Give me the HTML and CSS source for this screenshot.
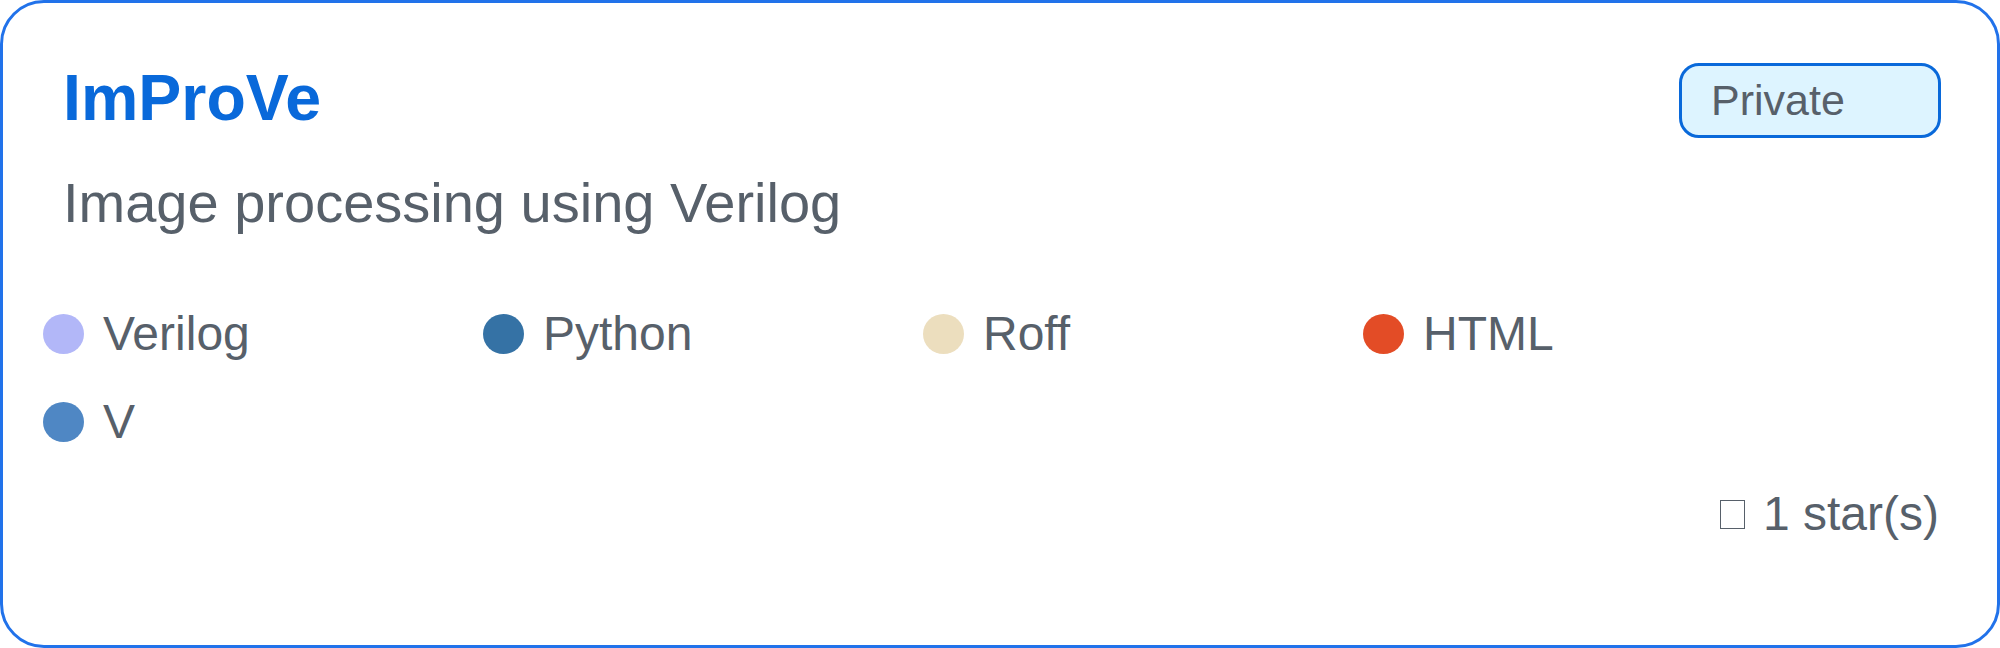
FILE: index.html
```html
<!DOCTYPE html>
<html lang="en">
<head>
<meta charset="utf-8">
<title>ImProVe</title>
<link rel="stylesheet" href="styles.css">
</head>
<body>
<div class="card">
  <div class="header">
    <h1 class="title">ImProVe</h1>
    <span class="badge">Private</span>
  </div>
  <p class="desc">Image processing using Verilog</p>
  <ul class="langs">
    <li class="lang"><span class="dot dot-verilog"></span><span class="lang-name">Verilog</span></li>
    <li class="lang"><span class="dot dot-python"></span><span class="lang-name">Python</span></li>
    <li class="lang"><span class="dot dot-roff"></span><span class="lang-name">Roff</span></li>
    <li class="lang"><span class="dot dot-html"></span><span class="lang-name">HTML</span></li>
    <li class="lang"><span class="dot dot-v"></span><span class="lang-name">V</span></li>
  </ul>
  <div class="stars">
    <span class="star-box" aria-label="star"></span>
    <span class="star-text">1 star(s)</span>
  </div>
</div>
</body>
</html>
```

FILE: styles.css
```css
html, body {
  margin: 0;
  padding: 0;
  background: #ffffff;
}

body {
  font-family: "Liberation Sans", Arial, sans-serif;
  color: #57606a;
}

.card {
  box-sizing: border-box;
  width: 2000px;
  height: 648px;
  border: 3px solid #2172ea;
  border-radius: 44px;
  background: #ffffff;
  padding: 57px 40px 0 40px;
  display: flex;
  flex-direction: column;
}

.header {
  display: flex;
  justify-content: space-between;
  align-items: flex-start;
  padding: 0 16px 0 20px;
}

.title {
  margin: 0;
  font-size: 64.5px;
  line-height: 76px;
  font-weight: 700;
  color: #0969da;
}

.badge {
  box-sizing: border-box;
  width: 262px;
  height: 75px;
  margin-top: 3px;
  border: 3px solid #0969da;
  border-radius: 20px;
  background: #ddf4ff;
  display: flex;
  align-items: center;
  padding-left: 29px;
  font-size: 43px;
  color: #57606a;
}

.desc {
  margin: 33px 0 0 0;
  padding-left: 20px;
  font-size: 56px;
  line-height: 64px;
}

.langs {
  list-style: none;
  margin: 75px 0 0 0;
  padding: 0;
  display: grid;
  grid-template-columns: repeat(4, 440px);
  row-gap: 40px;
}

.lang {
  display: flex;
  align-items: center;
  gap: 19px;
  height: 48px;
}

.dot {
  width: 41px;
  height: 40px;
  border-radius: 50%;
  flex: none;
}

.dot-verilog { background: #b2b7f8; }
.dot-python { background: #3572a5; }
.dot-roff { background: #ecdebe; }
.dot-html { background: #e34c26; }
.dot-v { background: #4f87c4; }

.lang-name {
  font-size: 48px;
  line-height: 48px;
}

.stars {
  margin-top: 44px;
  display: flex;
  justify-content: flex-end;
  align-items: center;
  gap: 18px;
  padding-right: 18px;
  height: 48px;
}

.star-box {
  box-sizing: border-box;
  width: 25px;
  height: 29px;
  border: 1px solid #57606a;
}

.star-text {
  font-size: 48px;
  line-height: 48px;
}
```
